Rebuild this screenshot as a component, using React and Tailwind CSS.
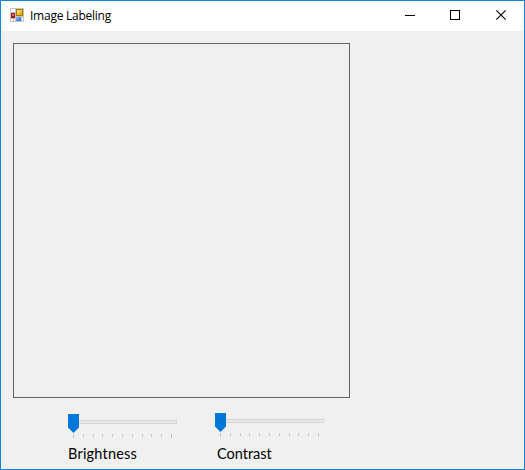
function AppIcon() {
  return (
    <svg width="14" height="14" viewBox="0 0 14 14" shapeRendering="crispEdges" className="block">
      <defs>
        <linearGradient id="gold" x1="0" y1="0" x2="1" y2="1">
          <stop offset="0" stopColor="#ffe680" />
          <stop offset="1" stopColor="#e0a000" />
        </linearGradient>
        <linearGradient id="blue" x1="0" y1="0" x2="1" y2="1">
          <stop offset="0" stopColor="#8fc0ff" />
          <stop offset="1" stopColor="#2868d0" />
        </linearGradient>
      </defs>
      <rect width="14" height="14" fill="#c3c3c3" />
      <rect x="1" y="1" width="4" height="3" fill="#fff" />
      <rect x="1" y="11" width="2" height="2" fill="#fff" />
      <rect x="4" y="11" width="1" height="2" fill="#fff" />
      <rect x="12" y="9" width="1" height="4" fill="#fff" />
      <rect x="1" y="5" width="4" height="5" fill="#a81818" />
      <rect x="2" y="6" width="2" height="2" fill="#e87060" />
      <rect x="6" y="1" width="7" height="7" fill="#a87800" />
      <rect x="7" y="2" width="5" height="5" fill="url(#gold)" />
      <rect x="6" y="9" width="5" height="4" fill="url(#blue)" />
    </svg>
  );
}

const TICKS = [0, 10, 20, 29, 39, 49, 59, 69, 78, 88, 98];

function TrackBar() {
  return (
    <div className="w-[109px]">
      <div className="flex h-[19px]">
        <svg width="11" height="19" viewBox="0 0 11 19" className="block shrink-0">
          <path d="M0 0H11V13.5L5.5 19L0 13.5Z" fill="#0078d7" />
        </svg>
        <div className="mt-[6px] h-1 flex-1 border border-l-0 border-[#d6d6d6] bg-[#e7eaea]" />
      </div>
      <svg width="109" height="5" viewBox="0 0 109 5" shapeRendering="crispEdges" className="block">
        {TICKS.map((x, i) => (
          <rect key={x} x={x + 5} y="1" width="1" height={i % 10 === 0 ? 4 : 3} fill="#c4c4c4" />
        ))}
      </svg>
    </div>
  );
}

export default function App() {
  return (
    <div className="flex h-[470px] w-[525px] flex-col overflow-hidden border border-[#1883d7] bg-[#f0f0f0] font-['Open_Sans','Noto_Sans',sans-serif] text-black">
      <header className="flex h-[30px] shrink-0 items-start bg-white">
        <div className="pt-[7px] pl-[9px]">
          <AppIcon />
        </div>
        <h1 className="pt-[6px] pl-[6px] text-[12px] leading-[18px] tracking-[-0.25px] whitespace-nowrap">Image Labeling</h1>
        <div className="ml-auto flex">
          <svg width="138" height="30" viewBox="0 0 138 30" fill="none" stroke="#000" className="block">
            <path d="M19 14.5H29" shapeRendering="crispEdges" />
            <path d="M64.5 9.5H73.5V18.5H64.5Z" shapeRendering="crispEdges" />
            <path d="M110.3 9.3L119.7 18.7M119.7 9.3L110.3 18.7" strokeWidth="1.1" />
          </svg>
        </div>
      </header>
      <main className="pt-3 pl-3">
        <div className="h-[355px] w-[337px] border border-[#646464]" />
        <div className="flex pl-[55px]">
          <div className="w-[147px] pt-4">
            <TrackBar />
            <div className="pt-[6px] font-['Lato','Open_Sans',sans-serif] text-[14.5px] leading-5 tracking-[0.2px]">Brightness</div>
          </div>
          <div className="pt-[15px]">
            <TrackBar />
            <div className="pt-[7px] pl-[2px] font-['Lato','Open_Sans',sans-serif] text-[14.5px] leading-5 tracking-0">Contrast</div>
          </div>
        </div>
      </main>
    </div>
  );
}
